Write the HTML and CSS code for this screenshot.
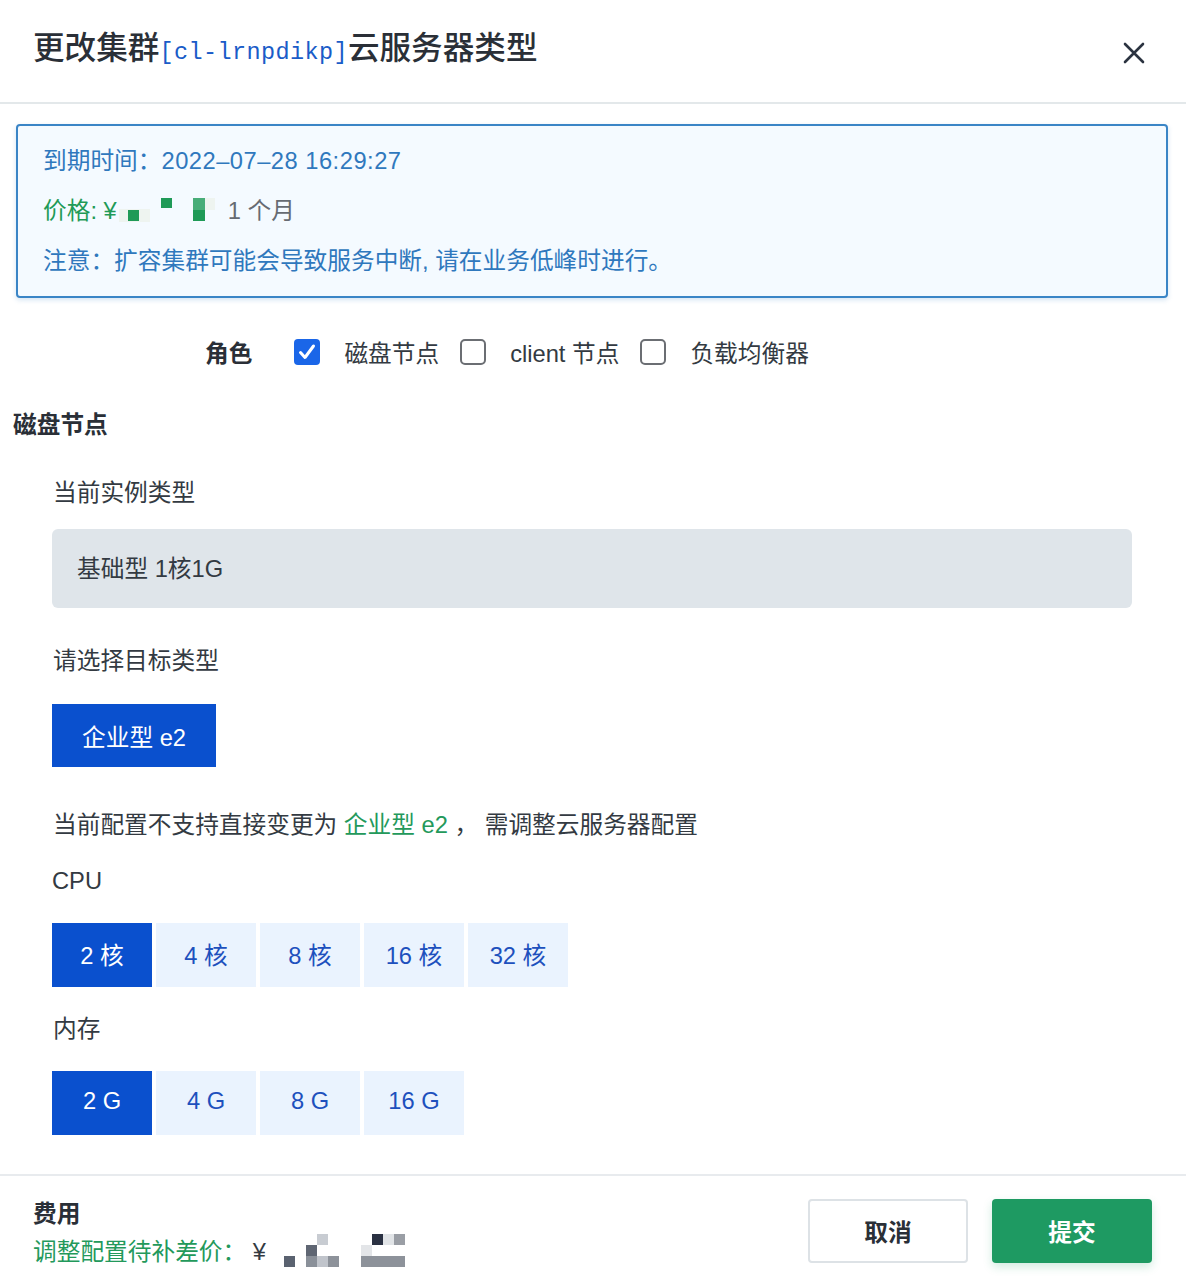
FILE: index.html
```html
<!DOCTYPE html>
<html lang="zh-CN">
<head>
<meta charset="utf-8">
<title>更改集群云服务器类型</title>
<link rel="stylesheet" href="styles.css">
</head>
<body>
<div class="dialog">
  <header class="header">
    <h1 class="title">更改集群<span class="code">[cl-lrnpdikp]</span>云服务器类型</h1>
    <svg class="close" width="22" height="22" viewBox="0 0 22 22"><path d="M2 2 L20 20 M20 2 L2 20" stroke="#2b3340" stroke-width="2.6" stroke-linecap="round"/></svg>
  </header>

  <div class="info">
    <div class="info-line">到期时间：<span class="date">2022–07–28 16:29:27</span></div>
    <div class="info-line price">价格: ¥<svg class="blur-a" width="96" height="24" viewBox="0 0 96 24"><rect x="0" y="11" width="31" height="13" fill="#eef4f0"/><rect x="9" y="12" width="11" height="11" fill="#1f9a57"/><rect x="42" y="0" width="11" height="10" fill="#1f9a57"/><rect x="74" y="0" width="12" height="12" fill="#48ad78"/><rect x="74" y="12" width="12" height="11" fill="#1f9a57"/><rect x="86" y="0" width="10" height="12" fill="#eef4f0"/></svg><span class="period">1 个月</span></div>
    <div class="info-line">注意：扩容集群可能会导致服务中断, 请在业务低峰时进行。</div>
  </div>

  <div class="roles">
    <span class="roles-label">角色</span>
    <label class="opt"><span class="box checked"><svg width="26" height="26" viewBox="0 0 26 26"><path d="M6.5 13.5 L11 18.5 L19.5 7" fill="none" stroke="#fff" stroke-width="3" stroke-linecap="round" stroke-linejoin="round"/></svg></span>磁盘节点</label>
    <label class="opt"><span class="box"></span>client 节点</label>
    <label class="opt"><span class="box"></span>负载均衡器</label>
  </div>

  <div class="section-title">磁盘节点</div>

  <div class="field">
    <div class="label">当前实例类型</div>
    <div class="current">基础型 1核1G</div>

    <div class="label l-target">请选择目标类型</div>
    <div class="type-row"><span class="type-btn">企业型 e2</span></div>

    <div class="label l-msg">当前配置不支持直接变更为 <span class="green">企业型 e2</span> ， 需调整云服务器配置</div>

    <div class="label l-cpu">CPU</div>
    <div class="btns">
      <span class="opt-btn active">2 核</span>
      <span class="opt-btn">4 核</span>
      <span class="opt-btn">8 核</span>
      <span class="opt-btn">16 核</span>
      <span class="opt-btn">32 核</span>
    </div>

    <div class="label l-mem">内存</div>
    <div class="btns">
      <span class="opt-btn active">2 G</span>
      <span class="opt-btn">4 G</span>
      <span class="opt-btn">8 G</span>
      <span class="opt-btn">16 G</span>
    </div>
  </div>

  <footer class="footer">
    <div class="fee">
      <div class="fee-title">费用</div>
      <div class="fee-line">调整配置待补差价： <span class="yen">¥</span><svg class="blur-b" width="124" height="33" viewBox="0 0 124 33"><rect x="3" y="22" width="11" height="11" fill="#5a6270"/><rect x="36" y="0" width="11" height="11" fill="#c8ccd2"/><rect x="25" y="11" width="11" height="11" fill="#5f6673"/><rect x="25" y="22" width="11" height="11" fill="#8a9099"/><rect x="36" y="22" width="11" height="11" fill="#c0c4cb"/><rect x="47" y="22" width="11" height="11" fill="#8d929a"/><rect x="91" y="0" width="11" height="11" fill="#2a3142"/><rect x="102" y="0" width="11" height="11" fill="#e1e4e7"/><rect x="113" y="0" width="11" height="11" fill="#9a9ea5"/><rect x="80" y="11" width="11" height="11" fill="#e3e5e8"/><rect x="80" y="22" width="44" height="11" fill="#8d929a"/></svg></div>
    </div>
    <div class="actions">
      <button class="btn cancel">取消</button>
      <button class="btn submit">提交</button>
    </div>
  </footer>
</div>
</body>
</html>
```

FILE: styles.css
```css
* { box-sizing: border-box; }

body {
  margin: 0;
  background: #fff;
  font-family: "Liberation Sans", "Noto Sans CJK SC", sans-serif;
  color: #333a42;
  font-size: 23.7px;
}

.dialog { width: 1186px; }

.header {
  height: 104px;
  border-bottom: 2px solid #e3e8ea;
  display: flex;
  align-items: center;
  justify-content: space-between;
  padding: 0 41px 0 33px;
}

.title {
  margin: 0 0 1px 0;
  font-size: 31.6px;
  font-weight: 500;
  color: #2a2f37;
  line-height: 40px;
}

.code {
  font-family: "Liberation Mono", "DejaVu Sans Mono", monospace;
  font-size: 23.5px;
  font-weight: normal;
  letter-spacing: 0.4px;
  color: #1a5cc8;
}

.close { display: block; margin-top: 4px; }

.info {
  margin: 20px 18px 0 16px;
  border: 2px solid #3a85c6;
  border-radius: 4px;
  background: #f4faff;
  padding: 10px 25px;
  box-shadow: 0 2px 5px rgba(58, 133, 198, 0.22);
}

.info-line {
  height: 50px;
  line-height: 50px;
  color: #2f78bd;
  white-space: nowrap;
}

.date { letter-spacing: 0.5px; }

.price { color: #1f9a57; }

.blur-a { vertical-align: -3px; margin-left: 2px; }

.period { color: #666b72; margin-left: 13px; }

.roles {
  display: flex;
  align-items: center;
  height: 40px;
  margin-top: 34px;
  padding-left: 205px;
}

.roles-label {
  font-weight: bold;
  color: #2a2f37;
  margin-right: 42px;
}

.opt {
  display: flex;
  align-items: center;
  margin-right: 21px;
  color: #333a42;
}

.box {
  width: 26px;
  height: 26px;
  margin-right: 24px;
  border: 2px solid #6b6e73;
  border-radius: 5px;
  display: block;
}

.box.checked {
  border: none;
  background: #1a66e8;
  border-radius: 4px;
}

.box svg { display: block; }

.section-title {
  margin: 33px 0 0 13px;
  font-weight: bold;
  line-height: 40px;
  color: #2a2f37;
}

.field { padding: 0 54px 0 52px; }

.label {
  line-height: 40px;
  margin-top: 28px;
  padding-left: 1px;
  color: #333a42;
}

.current {
  margin-top: 16px;
  height: 79px;
  border-radius: 6px;
  background: #dfe5ea;
  display: flex;
  align-items: center;
  padding: 0 0 3px 25px;
  color: #333a42;
}

.l-target { margin-top: 33px; }

.type-row { margin-top: 23px; display: flex; }

.type-btn {
  width: 164px;
  height: 63px;
  background: #0a50ce;
  color: #fff;
  display: flex;
  align-items: center;
  justify-content: center;
}

.l-msg { margin-top: 38px; }

.green { color: #23995b; }

.l-cpu { margin-top: 16px; padding-left: 0; }

.l-mem { margin-top: 22px; }

.btns {
  display: flex;
  gap: 4px;
  margin-top: 22px;
}

.opt-btn {
  width: 100px;
  height: 64px;
  background: #eaf3fe;
  color: #1d50bd;
  display: flex;
  align-items: center;
  justify-content: center;
  padding-bottom: 3px;
}

.opt-btn.active {
  background: #0a50ce;
  color: #fff;
}

.footer {
  margin-top: 39px;
  border-top: 2px solid #e8ebee;
  height: 114px;
  display: flex;
  justify-content: space-between;
  align-items: flex-start;
  padding: 0 34px 0 33px;
}

.fee { padding-top: 19px; }

.fee-title {
  line-height: 38px;
  font-weight: bold;
  color: #2a2f37;
}

.fee-line {
  line-height: 38px;
  color: #23995b;
  white-space: nowrap;
}

.yen { color: #333a42; margin-right: 15px; }

.blur-b { vertical-align: -7px; }

.actions {
  display: flex;
  gap: 24px;
  margin-top: 23px;
}

.btn {
  width: 160px;
  height: 64px;
  font-family: inherit;
  font-size: 23.7px;
  font-weight: bold;
  border-radius: 4px;
  cursor: pointer;
}

.cancel {
  background: #fff;
  border: 2px solid #dde2e6;
  color: #2a2f37;
}

.submit {
  background: #1e9a62;
  border: none;
  color: #fff;
  box-shadow: 0 4px 10px rgba(30, 154, 98, 0.2);
}
```
